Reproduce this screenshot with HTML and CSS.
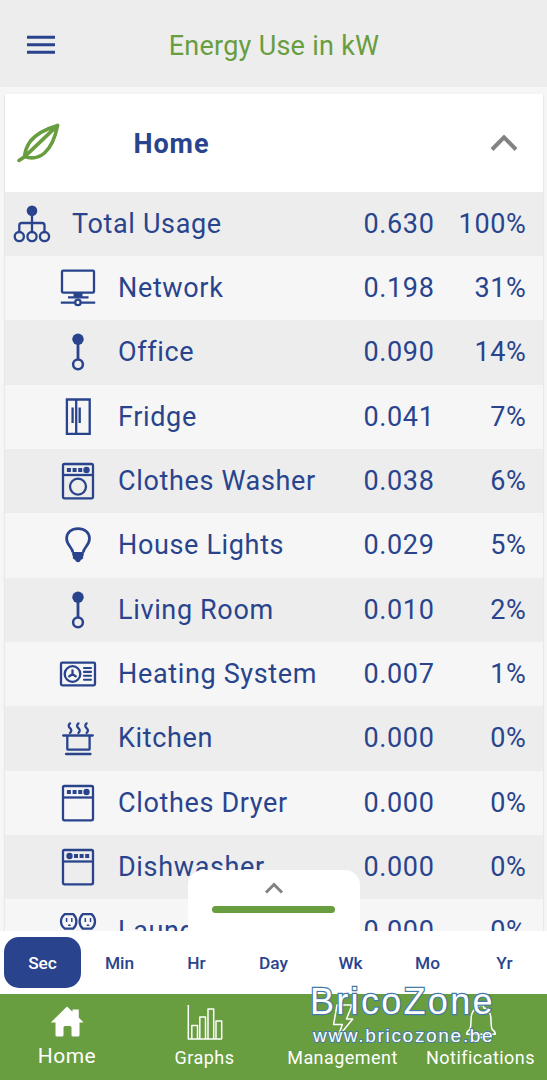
FILE: index.html
```html
<!DOCTYPE html>
<html lang="en">
<head>
<meta charset="utf-8">
<title>Energy Use</title>
<link rel="stylesheet" href="styles.css">
</head>
<body>
<svg class="sprite" aria-hidden="true">
  <symbol id="link" viewBox="0 0 38 38"><path d="M19 6v20" stroke-width="2.8"/><circle cx="19" cy="6.3" r="5.7" class="solid"/><circle cx="19" cy="31.3" r="4.9" stroke-width="2.5"/></symbol>
  <symbol id="tree" viewBox="0 0 38 38"><path d="M19 6v20M6.300 27v-6.500q0-2.500 2.500-2.500h20.200q2.500 0 2.500 2.500v6.500" stroke-width="2.300"/><circle cx="19" cy="5.800" r="5.300" class="solid"/><circle cx="6.300" cy="31.600" r="4.600"/><circle cx="19" cy="31.600" r="4.600"/><circle cx="31.500" cy="31.600" r="4.600"/></symbol>
  <symbol id="network" viewBox="0 0 38 38"><rect x="3" y="1.600" width="32" height="22" rx="1.200"/><path d="M9 28.300h20.500M1.800 33.600h14M22 33.600h14.200"/><path d="M14.500 23h9v5h-9z" class="solid"/><circle cx="18.900" cy="33.400" r="2.700"/></symbol>
  <symbol id="fridge" viewBox="0 0 38 38"><path d="M7.900 1.500h22.800v34.300H7.900zM17.200 1.500v34.300M13.600 9.500v15.500M20.700 9.500v15.500"/></symbol>
  <symbol id="washer" viewBox="0 0 38 38"><rect x="4" y="2" width="30" height="34.300" rx="1.500"/><path d="M4 13h30"/><path d="M7.900 6h4v4h-4zM13.600 6h4v4h-4zM19.200 6h4v4h-4z" class="solid"/><circle cx="27.500" cy="8" r="3.200" class="solid"/><circle cx="19" cy="24.600" r="8"/></symbol>
  <symbol id="dryer" viewBox="0 0 38 38"><rect x="4" y="2" width="30" height="34.300" rx="1.500"/><path d="M4 13.500h30"/><path d="M7.900 6h4v4h-4zM13.600 6h4v4h-4zM19.200 6h4v4h-4z" class="solid"/><circle cx="27.500" cy="8" r="3.200" class="solid"/></symbol>
  <symbol id="dishwasher" viewBox="0 0 38 38"><rect x="4" y="2" width="30" height="34.300" rx="1.500"/><path d="M4 13.500h30"/><path d="M15 6h4v4h-4zM20.600 6h4v4h-4zM26.200 6h4v4h-4z" class="solid"/><circle cx="10.500" cy="8" r="3.200" class="solid"/></symbol>
  <symbol id="bulb" viewBox="0 0 38 38"><path d="M13.800 26.500c0-5-6.200-7-6.200-14C7.600 6.400 12.500 2.600 19 2.600s11.500 3.800 11.500 9.900c0 7-6.200 9-6.200 14" stroke-width="2.700"/><path d="M13.200 26h11.600v3l-.7 1.200v2.300l-2.300 1.500-.8 1.400q-2 1.500-4 0l-.8-1.400-2.300-1.500v-2.300l-.7-1.200z" class="solid"/></symbol>
  <symbol id="heat" viewBox="0 0 38 38"><rect x="2" y="7.700" width="34" height="22.600" rx="1.200"/><circle cx="13.500" cy="19" r="7.800"/><path d="M25 13h7M25 16.900h7M25 20.800h7M25 24.700h7" stroke-width="2.100" stroke-linecap="round"/><path d="M13.500 19.300v-4M13.500 19.300l-3.200 2M13.500 19.300l3.200 2" stroke-linecap="round"/></symbol>
  <symbol id="pot" viewBox="0 0 38 38"><g transform="translate(0 -.8)"><path d="M4.200 17.300h29.600M7 35.800h24.500" stroke-linecap="round"/><path d="M8.300 17.500v13.200q0 .8.800.8h20.700q.8 0 .8-.8V17.500"/><path d="M11 5.200q-2.600 2.500 0 4.800t0 4.800M19.400 5.200q-2.600 2.500 0 4.800t0 4.800M27.600 5.200q-2.600 2.500 0 4.800t0 4.800" stroke-linecap="round"/></g></symbol>
  <symbol id="outlet" viewBox="0 0 38 38"><path d="M5.800 2.200h8.400q3.200 3 3.200 7.200t-3.200 7.200H5.800Q2 13.600 2 9.400t3.800-7.200z"/><path d="M23.800 2.200h8.800q3.400 3 3.400 7.200t-3.400 7.200h-8.800q-3.200-3-3.200-7.200t3.200-7.200z"/><path d="M7.600 6v4M12.800 6v4M26.300 6v4M31.500 6v4" stroke-width="1.500"/><path d="M8.900 14q0-1.700 1.500-1.700t1.500 1.700zM27.500 14q0-1.700 1.500-1.700t1.500 1.700z" class="solid"/></symbol>
</svg>

<header class="topbar">
  <svg class="menu" viewBox="0 0 28 20"><path d="M0 2.200h28M0 9.700h28M0 17.300h28"/></svg>
  <h1 class="title">Energy Use in kW</h1>
</header>

<main class="viewport">
  <section class="card">
    <div class="card-head">
      <svg class="leaf" viewBox="0 0 44 42"><path d="M2 38.400 8 34.400 40.600 3.400M40.600 3.400C30 6.500 20 11 13.500 19C9.500 24.500 8 29 7.500 34.600C13 36.500 21 36.500 27.500 31C35.500 24 38.500 14 40.600 3.400z"/></svg>
      <h2 class="card-title">Home</h2>
      <svg class="chevron" viewBox="0 0 28 18"><path d="M2 15.500 14 3.300 26 15.500"/></svg>
    </div>
    <div class="row total"><svg class="icon"><use href="#tree"/></svg><span class="name">Total Usage</span><span class="kw">0.630</span><span class="pct">100%</span></div>
    <div class="row"><svg class="icon"><use href="#network"/></svg><span class="name">Network</span><span class="kw">0.198</span><span class="pct">31%</span></div>
    <div class="row"><svg class="icon"><use href="#link"/></svg><span class="name">Office</span><span class="kw">0.090</span><span class="pct">14%</span></div>
    <div class="row"><svg class="icon"><use href="#fridge"/></svg><span class="name">Fridge</span><span class="kw">0.041</span><span class="pct">7%</span></div>
    <div class="row"><svg class="icon"><use href="#washer"/></svg><span class="name">Clothes Washer</span><span class="kw">0.038</span><span class="pct">6%</span></div>
    <div class="row"><svg class="icon"><use href="#bulb"/></svg><span class="name">House Lights</span><span class="kw">0.029</span><span class="pct">5%</span></div>
    <div class="row"><svg class="icon"><use href="#link"/></svg><span class="name">Living Room</span><span class="kw">0.010</span><span class="pct">2%</span></div>
    <div class="row"><svg class="icon"><use href="#heat"/></svg><span class="name">Heating System</span><span class="kw">0.007</span><span class="pct">1%</span></div>
    <div class="row"><svg class="icon"><use href="#pot"/></svg><span class="name">Kitchen</span><span class="kw">0.000</span><span class="pct">0%</span></div>
    <div class="row"><svg class="icon"><use href="#dryer"/></svg><span class="name">Clothes Dryer</span><span class="kw">0.000</span><span class="pct">0%</span></div>
    <div class="row"><svg class="icon"><use href="#dishwasher"/></svg><span class="name">Dishwasher</span><span class="kw">0.000</span><span class="pct">0%</span></div>
    <div class="row"><svg class="icon"><use href="#outlet"/></svg><span class="name">Laundry</span><span class="kw">0.000</span><span class="pct">0%</span></div>
  </section>
  <div class="drawer">
    <svg class="drawer-arrow" viewBox="0 0 20 14"><path d="M2 11.500 10 3.500 18 11.500"/></svg>
    <div class="drawer-bar"></div>
  </div>
</main>

<nav class="ranges">
  <span class="range active">Sec</span><span class="range">Min</span><span class="range">Hr</span><span class="range">Day</span><span class="range">Wk</span><span class="range">Mo</span><span class="range">Yr</span>
</nav>

<footer class="tabs">
  <div class="tab current"><svg class="tab-icon" viewBox="0 0 38 38"><path class="house" d="M2.800 19.500 19 3.500l5.500 5.200V6.500h6.300v8L35.500 19.500H31.500V32q0 1.500-1.500 1.500h-5q-1.500 0-1.500-1.500v-7.500q0-1.500-1.500-1.500h-5q-1.500 0-1.500 1.500V32q0 1.500-1.500 1.500h-5q-1.500 0-1.500-1.500V19.500z"/></svg><span>Home</span></div>
  <div class="tab"><svg class="tab-icon" viewBox="0 0 38 38"><path d="M2.300 2v34H36M5.800 36V22.500h5.700V36M13.800 36V14h5.700V36M22 36V6h5.700v30M30 36V18h5.700v18"/></svg><span>Graphs</span></div>
  <div class="tab"><svg class="tab-icon" viewBox="0 0 38 38"><path d="M13 2h15l-5.500 14h6.200L14 34l4.300-12.500H9.600z"/></svg><span>Management</span></div>
  <div class="tab"><svg class="tab-icon" viewBox="0 0 38 38"><path d="M4.700 31.200q0-2.700 3-4.500Q9 24 9 17c0-7 3-12 7.200-12Q16 2.300 19 2.300T21.800 5C26 5 29 10 29 17q0 7 1.300 9.700 3 1.800 3 4.500zM15.500 31.500q3.500 6 7 0"/></svg><span>Notifications</span></div>
  <div class="watermark"><span class="brand">BricoZone</span><span class="site">www.bricozone.be</span></div>
</footer>
</body>
</html>
```
FILE: styles.css
```css
* { box-sizing: border-box; }
body { margin: 0; width: 547px; height: 1080px; overflow: hidden; display: flex; flex-direction: column; background: #fff; color: #29448d; font-family: Roboto, sans-serif; }
.sprite { display: none; }
svg { fill: none; stroke: currentColor; flex: none; }
.solid { fill: currentColor; stroke: none; }
.topbar { height: 87px; flex: none; background: #ededed; display: grid; grid-template-columns: 82px 1fr 82px; align-items: center; }
.menu { width: 28px; height: 20px; margin-left: 27px; margin-top: 3px; stroke-width: 3; }
.title { margin: 4px 0 0 1px; text-align: center; font-size: 27px; font-weight: 400; letter-spacing: .27px; color: #689d40; white-space: nowrap; }
.viewport { height: 844px; flex: none; position: relative; overflow: hidden; background: #f6f6f6; padding: 6.500px 4px 0 4.500px; }
.card { box-shadow: 0 1px 2px rgba(0,0,0,.18); }
.card-head { height: 98px; background: #fff; display: flex; align-items: center; }
.leaf { width: 44px; height: 42px; margin-left: 12px; color: #689d40; stroke-width: 3.600; stroke-linecap: round; stroke-linejoin: round; }
.card-title { margin: 2px 0 0 73px; flex: 1; font-size: 27px; font-weight: 700; letter-spacing: .9px; }
.chevron { width: 28px; height: 18px; margin-right: 25px; color: #828282; stroke-width: 4; }
.row { height: 64.350px; display: flex; align-items: center; padding: 0 16.500px 0 54px; background: #f6f6f6; font-size: 27px; letter-spacing: .65px; white-space: nowrap; }
.row:nth-child(even) { background: #ededed; }
.total { padding-left: 8px; }
.icon { width: 38px; height: 38px; stroke-width: 2.300; }
.name { flex: 1; margin-left: 21.500px; }
.kw { width: 72px; text-align: right; }
.pct { width: 92px; text-align: right; }
.drawer { position: absolute; left: 188px; bottom: 0; width: 171.500px; height: 61px; border-radius: 15px 15px 0 0; background: #fff; display: flex; flex-direction: column; align-items: center; padding-top: 11px; }
.drawer-arrow { width: 20px; height: 14px; color: #828282; stroke-width: 3; }
.drawer-bar { width: 123px; height: 6.500px; border-radius: 4px; background: #689d40; margin-top: 11px; }
.ranges { height: 63px; flex: none; display: flex; justify-content: space-between; padding: 6px 4px; }
.range { width: 77px; display: flex; align-items: center; justify-content: center; border-radius: 15px; font-size: 17.300px; font-weight: 500; padding-top: 1px; }
.active { background: #29448d; color: #fff; }
.tabs { height: 86px; flex: none; position: relative; display: grid; grid-template-columns: 134px repeat(3, 138px); background: #689d40; color: #fff; }
.tab { display: flex; flex-direction: column; align-items: center; padding: 9px 0 0 3px; font-size: 18px; letter-spacing: .45px; white-space: nowrap; }
.tab span { margin-top: 6px; }
.tab-icon { width: 38px; height: 38px; stroke-width: 1.500; stroke-linejoin: round; }
.tab.current { font-size: 21px; padding-left: 0; }
.current span { margin-top: 3px; }
.house { fill: #fff; stroke: none; }
.watermark { position: absolute; left: 310px; top: -13px; color: #fff; font-family: "Liberation Sans", Arial, sans-serif; paint-order: stroke; }
.brand, .site { display: block; white-space: nowrap; -webkit-text-stroke: 1.800px #447ba5; }
.brand { font-size: 36px; line-height: 41px; letter-spacing: 2.300px; -webkit-text-stroke-width: 2.400px; }
.site { margin: 3px 0 0 3px; font-size: 19px; line-height: 22px; letter-spacing: 1.700px; }
```
